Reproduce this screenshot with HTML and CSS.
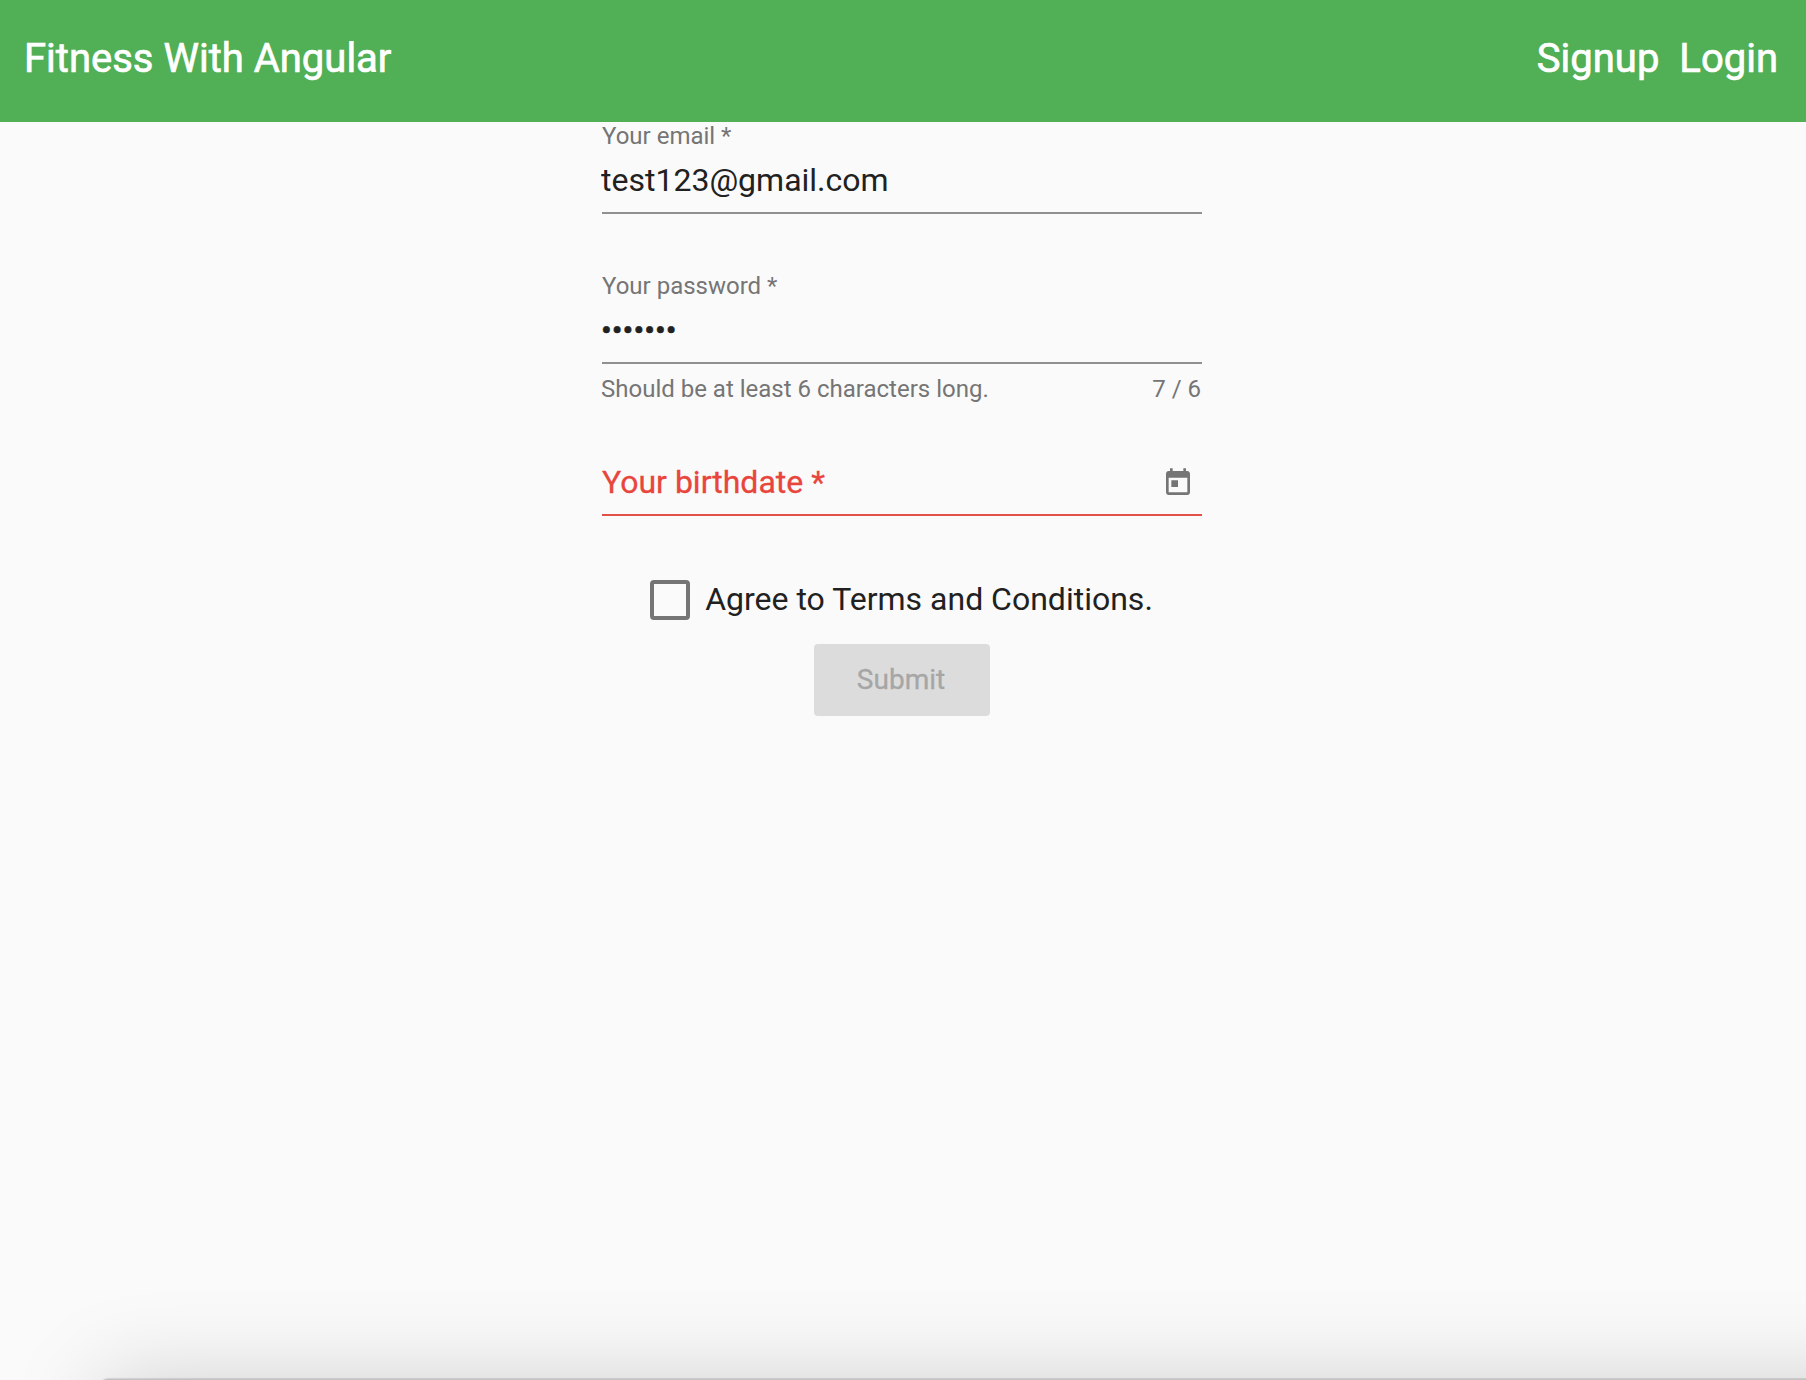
FILE: index.html
```html
<!DOCTYPE html>
<html lang="en">
<head>
<meta charset="utf-8">
<title>Fitness With Angular</title>
<link rel="stylesheet" href="styles.css">
</head>
<body>
<header class="toolbar">
  <a class="brand">Fitness With Angular</a>
  <nav class="links"><a>Signup</a><a>Login</a></nav>
</header>
<main>
  <form class="form">
    <div class="field">
      <label class="label" for="email">Your email *</label>
      <div class="control"><input id="email" type="text" value="test123@gmail.com"></div>
    </div>
    <div class="field">
      <label class="label" for="password">Your password *</label>
      <div class="control"><input id="password" type="password" value="1234567"></div>
      <div class="hints"><span>Should be at least 6 characters long.</span><span>7 / 6</span></div>
    </div>
    <div class="field birthdate">
      <div class="control invalid">
        <span class="placeholder">Your birthdate *</span>
        <svg class="today" viewBox="0 0 24 24"><path d="M19 3h-1V1h-2v2H8V1H6v2H5c-1.11 0-1.99.9-1.99 2L3 19c0 1.1.89 2 2 2h14c1.1 0 2-.9 2-2V5c0-1.1-.9-2-2-2zm0 16H5V8h14v11zM7 10h5v5H7z"/></svg>
      </div>
    </div>
    <label class="terms"><span class="box"></span><span>Agree to Terms and Conditions.</span></label>
    <button class="submit" type="button" disabled>Submit</button>
  </form>
</main>
<div class="window-shadow"></div>
</body>
</html>
```
FILE: styles.css
```css
* { box-sizing: border-box; }
html, body { height: 100%; }
body {
  margin: 0;
  position: relative;
  background: #fafafa;
  color: #212121;
  font-family: Roboto, "Liberation Sans", sans-serif;
  font-size: 32px;
}
.toolbar {
  display: flex;
  justify-content: space-between;
  align-items: center;
  height: 122px;
  padding: 0 28px 4px 24px;
  background: #51af55;
  color: #fff;
  font-size: 40px;
  font-weight: 400;
  line-height: 48px;
  -webkit-text-stroke: .7px #fff;
}
.links { display: flex; gap: 20px; }
.form {
  display: flex;
  flex-direction: column;
  align-items: center;
  width: 600px;
  margin: 2px 0 0 602px;
}
.field { width: 100%; margin-bottom: 60px; }
.label {
  display: block;
  margin-bottom: 14px;
  color: #757575;
  font-size: 24px;
  line-height: 24px;
}
.control {
  display: flex;
  height: 52px;
  padding-bottom: 14px;
  border-bottom: 2px solid #909090;
}
.control input {
  width: 100%;
  height: 36px;
  margin-left: -1px;
  padding: 0;
  border: 0;
  outline: 0;
  background: none;
  color: inherit;
  font: inherit;
  line-height: 36px;
}
#password { -webkit-text-stroke: .6px #212121; }
.hints {
  display: flex;
  justify-content: space-between;
  margin: 13px 1px 0 -1px;
  color: #757575;
  font-size: 24px;
  line-height: 24px;
}
.birthdate { margin: 3px 0 64px; }
.invalid {
  justify-content: space-between;
  padding-right: 8px;
  border-color: #e2504a;
  color: #e8453c;
  line-height: 36px;
}
.placeholder { -webkit-text-stroke: .3px #e8453c; }
.today { width: 32px; height: 32px; margin-top: 3px; fill: #757575; }
.terms {
  display: flex;
  align-items: center;
  gap: 15px;
  height: 40px;
  padding-right: 1px;
  line-height: 38px;
}
.terms span:last-child { padding-bottom: 2px; }
.box {
  width: 40px;
  height: 40px;
  border: 4px solid #757575;
  border-radius: 4px;
}
.submit {
  width: 176px;
  height: 72px;
  margin-top: 24px;
  padding: 0 2px 0 0;
  border: 0;
  border-radius: 4px;
  background: #dcdcdc;
  color: #a6a6a6;
  font: 400 28px/72px Roboto, "Liberation Sans", sans-serif;
  -webkit-text-stroke: .3px #a6a6a6;
}
/* Upper edge of the window lying over the bottom of the page */
.window-shadow {
  position: absolute;
  left: 0;
  right: 0;
  bottom: 0;
  height: 110px;
  overflow: hidden;
  pointer-events: none;
}
.window-shadow::before {
  content: "";
  display: block;
  width: 2000px;
  height: 300px;
  margin: 109px 0 0 100px;
  background: #c2c2c2;
  border-radius: 8px;
  box-shadow: 0 0 1px 1px rgba(0, 0, 0, .12), 0 0 90px rgba(0, 0, 0, .17);
}
```
